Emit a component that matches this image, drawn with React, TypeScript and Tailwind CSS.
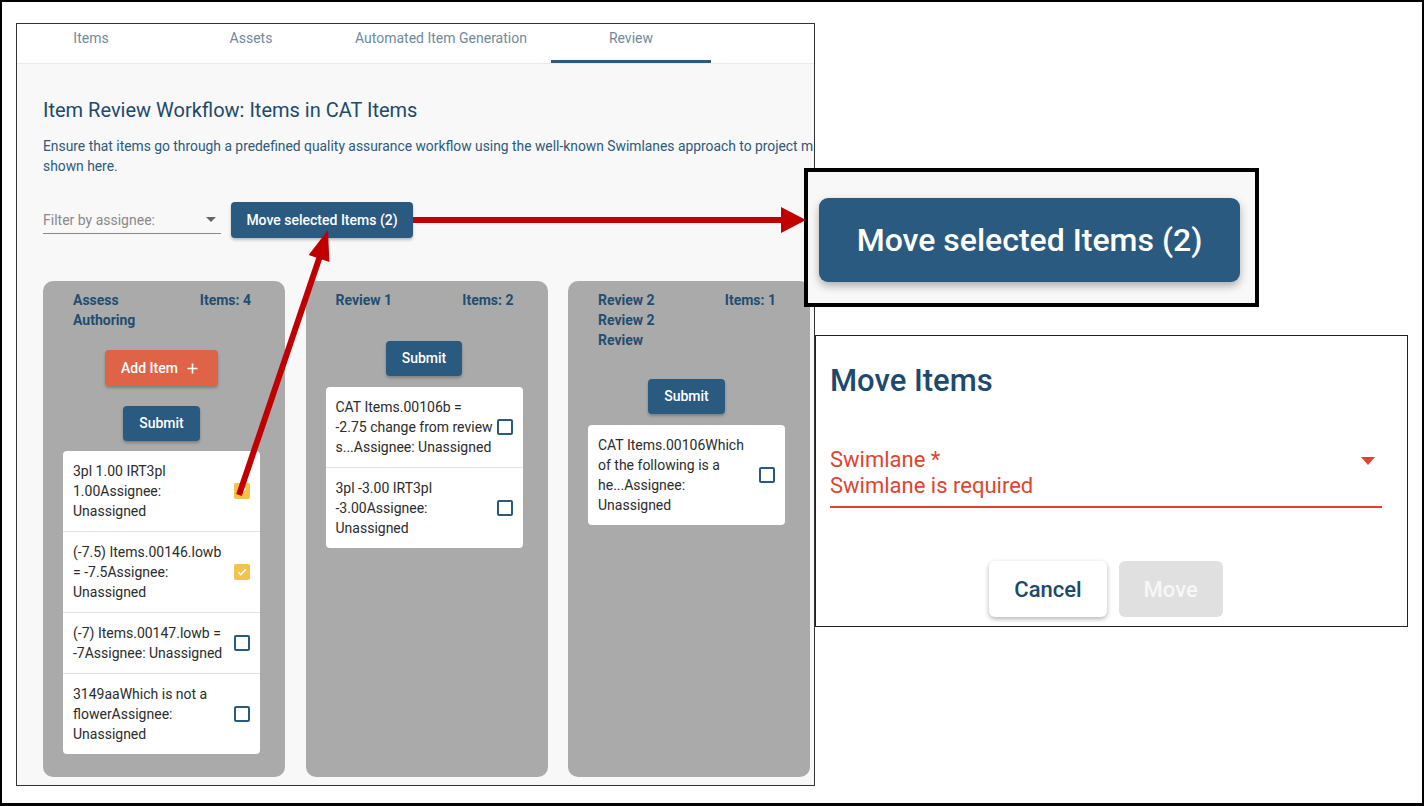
import React from 'react';

type Item = { lines: string[]; checked?: boolean };
type Lane = {
  title: string;
  count: number;
  addItem?: boolean;
  submitTop: string;
  cardTop: string;
  items: Item[];
};

const lanes: Lane[] = [
  {
    title: 'Assess Authoring',
    count: 4,
    addItem: true,
    submitTop: 'mt-[20px]',
    cardTop: 'mt-[10px]',
    items: [
      { lines: ['3pl 1.00 IRT3pl', '1.00Assignee:', 'Unassigned'], checked: true },
      { lines: ['(-7.5) Items.00146.lowb', '= -7.5Assignee:', 'Unassigned'], checked: true },
      { lines: ['(-7) Items.00147.lowb =', '-7Assignee: Unassigned'] },
      { lines: ['3149aaWhich is not a', 'flowerAssignee:', 'Unassigned'] },
    ],
  },
  {
    title: 'Review 1',
    count: 2,
    submitTop: 'mt-[31px]',
    cardTop: 'mt-[11px]',
    items: [
      { lines: ['CAT Items.00106b =', '-2.75 change from review', 's...Assignee: Unassigned'] },
      { lines: ['3pl -3.00 IRT3pl', '-3.00Assignee:', 'Unassigned'] },
    ],
  },
  {
    title: 'Review 2 Review 2 Review',
    count: 1,
    submitTop: 'mt-[29px]',
    cardTop: 'mt-[11px]',
    items: [{ lines: ['CAT Items.00106Which', 'of the following is a', 'he...Assignee:', 'Unassigned'] }],
  },
];

const tabs = [
  { label: 'Items', active: false },
  { label: 'Assets', active: false },
  { label: 'Automated Item Generation', active: false },
  { label: 'Review', active: true },
];

const Checkbox: React.FC<{ checked?: boolean }> = ({ checked }) =>
  checked ? (
    <div className="w-[16px] h-[16px] rounded-[2px] bg-[#f5c24a] flex items-center justify-center shrink-0">
      <svg width="12" height="12" viewBox="0 0 12 12">
        <polyline points="2.2,6.2 4.8,8.6 9.8,3.4" fill="none" stroke="#fff" strokeWidth="1.6" />
      </svg>
    </div>
  ) : (
    <div className="w-[16px] h-[16px] rounded-[2px] border-2 border-[#2a5a7f] shrink-0" />
  );

const LaneColumn: React.FC<{ lane: Lane }> = ({ lane }) => (
  <div className="w-[242px] h-[496px] shrink-0 rounded-[10px] bg-[#aaaaaa] pt-[9px] pl-[20px] pr-[25px] flex flex-col items-center">
    {/* header */}
    <div className="w-full pl-[10px] pr-[9px] flex items-start justify-between text-[14px] leading-[20px] font-bold text-[#1f4e72]">
      <span className="w-[95px]">{lane.title}</span>
      <span>Items: {lane.count}</span>
    </div>

    {lane.addItem && (
      <button className="mt-[20px] h-[36px] pl-[16px] pr-[20px] rounded-[4px] bg-[#df6447] text-white text-[14px] font-medium flex items-center gap-[9px] shadow-[0_2px_3px_rgba(0,0,0,0.25)]">
        Add Item
        <svg width="11" height="11" viewBox="0 0 11 11">
          <path d="M5.5 0.5v10M0.5 5.5h10" stroke="#fff" strokeWidth="1.6" />
        </svg>
      </button>
    )}

    <button
      className={`${lane.submitTop} h-[35px] px-[16px] rounded-[4px] bg-[#2a5a7f] text-white text-[14px] font-medium shadow-[0_2px_3px_rgba(0,0,0,0.25)]`}
    >
      Submit
    </button>

    <div className={`${lane.cardTop} w-full bg-white rounded-[4px]`}>
      {lane.items.map((item, i) => (
        <div
          key={i}
          className={`flex items-center pl-[10px] pr-[10px] py-[10px] ${i > 0 ? 'border-t border-[#e2e2e2]' : ''}`}
        >
          <div className="w-[158px] text-[14px] leading-[20px] text-[#2b2b2b] whitespace-nowrap">
            {item.lines.map((l, j) => (
              <div key={j}>{l}</div>
            ))}
          </div>
          <div className="ml-auto">
            <Checkbox checked={item.checked} />
          </div>
        </div>
      ))}
    </div>
  </div>
);

export default function App() {
  return (
    <div className="relative w-[1424px] h-[806px] overflow-hidden bg-white font-['Roboto',sans-serif] shadow-[inset_0_0_0_2px_#000,inset_0_-3px_0_0_#000]">
      <div className="flex items-start pl-[16px] pt-[23px]">
        {/* screenshot panel */}
        <div className="w-[799px] h-[763px] shrink-0 border border-[#333] flex flex-col overflow-hidden">
          {/* tabs */}
          <div className="h-[40px] bg-white border-b border-[#ebebeb] flex -ml-[6px] shrink-0">
            {tabs.map((t) => (
              <div
                key={t.label}
                className="relative min-w-[160px] px-[24px] h-[39px] pt-[4px] text-center text-[14px] leading-[20px] text-[#72899c] whitespace-nowrap"
              >
                {t.label}
                {t.active && <span className="absolute left-0 right-0 bottom-0 h-[3px] bg-[#2e5a7c]" />}
              </div>
            ))}
          </div>

          {/* content */}
          <div className="flex-1 bg-[#f8f8f8] px-[26px] pt-[32px] overflow-hidden">
            <h1 className="text-[20px] leading-[28px] text-[#1d4a6c] whitespace-nowrap">
              Item Review Workflow: Items in CAT Items
            </h1>
            <div className="mt-[12px] text-[13.85px] leading-[20px] text-[#2d5a7b] whitespace-nowrap">
              <div>
                Ensure that items go through a predefined quality assurance workflow using the well-known Swimlanes approach to project management. The swimlanes are
              </div>
              <div>shown here.</div>
            </div>

            <div className="mt-[26px] flex items-start">
              <div className="w-[178px] h-[32px] pt-[4px] border-b border-[#8a8a8a] flex items-center justify-between">
                <span className="text-[14px] leading-[20px] text-[#8a8a8a]">Filter by assignee:</span>
                <svg width="10" height="5" viewBox="0 0 10 5" className="mr-[5px]">
                  <polygon points="0,0 10,0 5,5" fill="#666" />
                </svg>
              </div>
              <button className="ml-[10px] w-[182px] h-[36px] rounded-[4px] bg-[#2a5a7f] text-white text-[14px] font-medium shadow-[0_2px_3px_rgba(0,0,0,0.25)]">
                Move selected Items (2)
              </button>
            </div>

            <div className="mt-[43px] flex gap-[20.5px]">
              {lanes.map((lane) => (
                <LaneColumn key={lane.title} lane={lane} />
              ))}
            </div>
          </div>
        </div>

        {/* dialog capture */}
        <div className="mt-[312px] w-[593px] h-[292px] shrink-0 border border-[#222] bg-white pl-[14px] pr-[25px] pt-[26px]">
          <div className="text-[31px] leading-[38px] font-medium text-[#1d4a6c]">Move Items</div>
          <div className="mt-[47px] pb-[7px] border-b-2 border-[#e0442e] flex items-start justify-between">
            <div className="text-[22px] leading-[26px] text-[#e0442e]">
              <div>Swimlane *</div>
              <div>Swimlane is required</div>
            </div>
            <svg width="14" height="8" viewBox="0 0 14 8" className="mt-[10px] mr-[7px]">
              <polygon points="0,0 14,0 7,8" fill="#e0442e" />
            </svg>
          </div>
          <div className="mt-[53px] flex justify-center gap-[12px]">
            <button className="h-[56px] px-[25px] rounded-[6px] bg-white text-[22px] font-medium text-[#1d4a6c] shadow-[0_2px_5px_rgba(0,0,0,0.3)]">
              Cancel
            </button>
            <button className="h-[56px] px-[25px] rounded-[6px] bg-[#e0e0e0] text-[22px] font-medium text-[#f7f7f7]">
              Move
            </button>
          </div>
        </div>
      </div>

      {/* zoomed button callout */}
      <div className="absolute left-[804px] top-[168px] w-[455px] h-[139px] border-4 border-black bg-[#f8f8f8] pl-[11px] pt-[26px]">
        <button className="w-[421px] h-[84px] rounded-[9px] bg-[#2a5a7f] text-white text-[32px] font-medium shadow-[0_4px_8px_rgba(0,0,0,0.3)]">
          Move selected Items (2)
        </button>
      </div>

      {/* annotation arrows */}
      <svg className="absolute left-0 top-0 pointer-events-none" width="1424" height="806">
        <line x1="239" y1="495" x2="320" y2="256" stroke="#c00000" strokeWidth="6" />
        <polygon points="328,230 308.6,255 329.4,262" fill="#c00000" />
        <line x1="413" y1="220" x2="783" y2="220" stroke="#c00000" strokeWidth="6" />
        <polygon points="806,220 781,207 781,233" fill="#c00000" />
      </svg>
    </div>
  );
}
